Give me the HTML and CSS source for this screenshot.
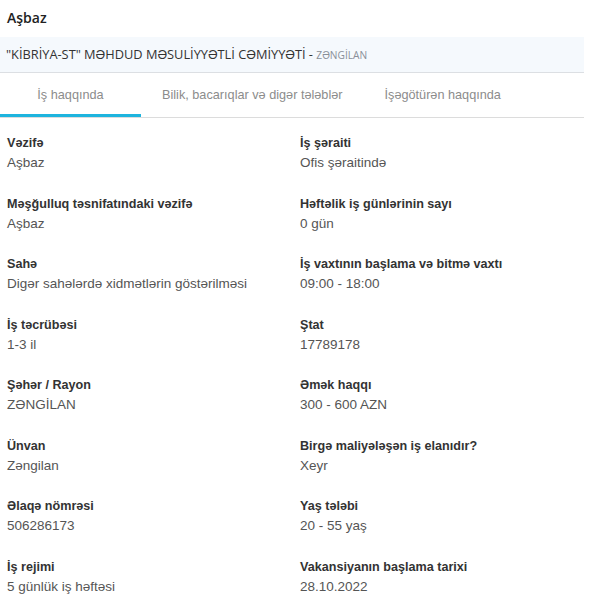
FILE: index.html
```html
<!DOCTYPE html>
<html>

<head>
    <title>Aşbaz</title>
    <link rel="stylesheet" href="styles.css">
</head>

<body>

    <div class="vacancy">
        <!-- Title -->
        <div class="title">Aşbaz</div>

        <!-- Company -->
        <div class="company">
            "KİBRİYA-ST" MƏHDUD MƏSULİYYƏTLİ CƏMİYYƏTİ - <span class="region">ZƏNGİLAN</span>
        </div>

        <!-- Tabs -->
        <div class="tabs">
            <div class="tab active">İş haqqında</div>
            <div class="tab">Bilik, bacarıqlar və digər tələblər</div>
            <div class="tab">İşəgötürən haqqında</div>
        </div>

        <!-- Details -->
        <div class="details">
            <div class="item">
                <div class="label">Vəzifə</div>
                <div class="value">Aşbaz</div>
            </div>
            <div class="item">
                <div class="label">İş şəraiti</div>
                <div class="value">Ofis şəraitində</div>
            </div>
            <div class="item">
                <div class="label">Məşğulluq təsnifatındaki vəzifə</div>
                <div class="value">Aşbaz</div>
            </div>
            <div class="item">
                <div class="label">Həftəlik iş günlərinin sayı</div>
                <div class="value">0 gün</div>
            </div>
            <div class="item">
                <div class="label">Sahə</div>
                <div class="value">Digər sahələrdə xidmətlərin göstərilməsi</div>
            </div>
            <div class="item">
                <div class="label">İş vaxtının başlama və bitmə vaxtı</div>
                <div class="value">09:00 - 18:00</div>
            </div>
            <div class="item">
                <div class="label">İş təcrübəsi</div>
                <div class="value">1-3 il</div>
            </div>
            <div class="item">
                <div class="label">Ştat</div>
                <div class="value">17789178</div>
            </div>
            <div class="item">
                <div class="label">Şəhər / Rayon</div>
                <div class="value">ZƏNGİLAN</div>
            </div>
            <div class="item">
                <div class="label">Əmək haqqı</div>
                <div class="value">300 - 600 AZN</div>
            </div>
            <div class="item">
                <div class="label">Ünvan</div>
                <div class="value">Zəngilan</div>
            </div>
            <div class="item">
                <div class="label">Birgə maliyələşən iş elanıdır?</div>
                <div class="value">Xeyr</div>
            </div>
            <div class="item">
                <div class="label">Əlaqə nömrəsi</div>
                <div class="value">506286173</div>
            </div>
            <div class="item">
                <div class="label">Yaş tələbi</div>
                <div class="value">20 - 55 yaş</div>
            </div>
            <div class="item">
                <div class="label">İş rejimi</div>
                <div class="value">5 günlük iş həftəsi</div>
            </div>
            <div class="item">
                <div class="label">Vakansiyanın başlama tarixi</div>
                <div class="value">28.10.2022</div>
            </div>
        </div>
    </div>

</body>

</html>
```

FILE: styles.css
```css
body {
    margin: 0;
    background-color: #fff;
    font-family: 'Liberation Sans', Arial, sans-serif;
    overflow: hidden;
}

.vacancy {
    width: 584px;
}

.title {
    font-family: 'Open Sans', sans-serif;
    font-weight: 600;
    font-size: 14px;
    color: #222;
    padding: 7px 7px 0;
    height: 30px;
    line-height: 22px;
}

.company {
    font-family: 'Open Sans', sans-serif;
    font-size: 12.8px;
    color: #333;
    background-color: #f5f9fd;
    border-bottom: 1px solid #dcdfe3;
    padding: 0 6px;
    height: 35px;
    line-height: 34px;
    white-space: nowrap;
}

.company .region {
    font-size: 10.2px;
    color: #8a9099;
}

.tabs {
    display: flex;
    border-bottom: 1px solid #dcdcdc;
    height: 44px;
}

.tab {
    font-size: 12.7px;
    color: #8c8c8c;
    line-height: 44px;
    padding: 0 21px;
    white-space: nowrap;
}

.tab.active {
    width: 141px;
    padding: 0;
    text-align: center;
    box-sizing: border-box;
    border-bottom: 3px solid #1eb4de;
    height: 44px;
}

.details {
    display: grid;
    grid-template-columns: 293px 1fr;
    row-gap: 20.5px;
    padding: 15px 7px 0;
}

.label {
    font-size: 12.6px;
    font-weight: bold;
    color: #333;
    line-height: 20px;
}

.value {
    font-size: 13.5px;
    color: #555;
    line-height: 20px;
}
```
